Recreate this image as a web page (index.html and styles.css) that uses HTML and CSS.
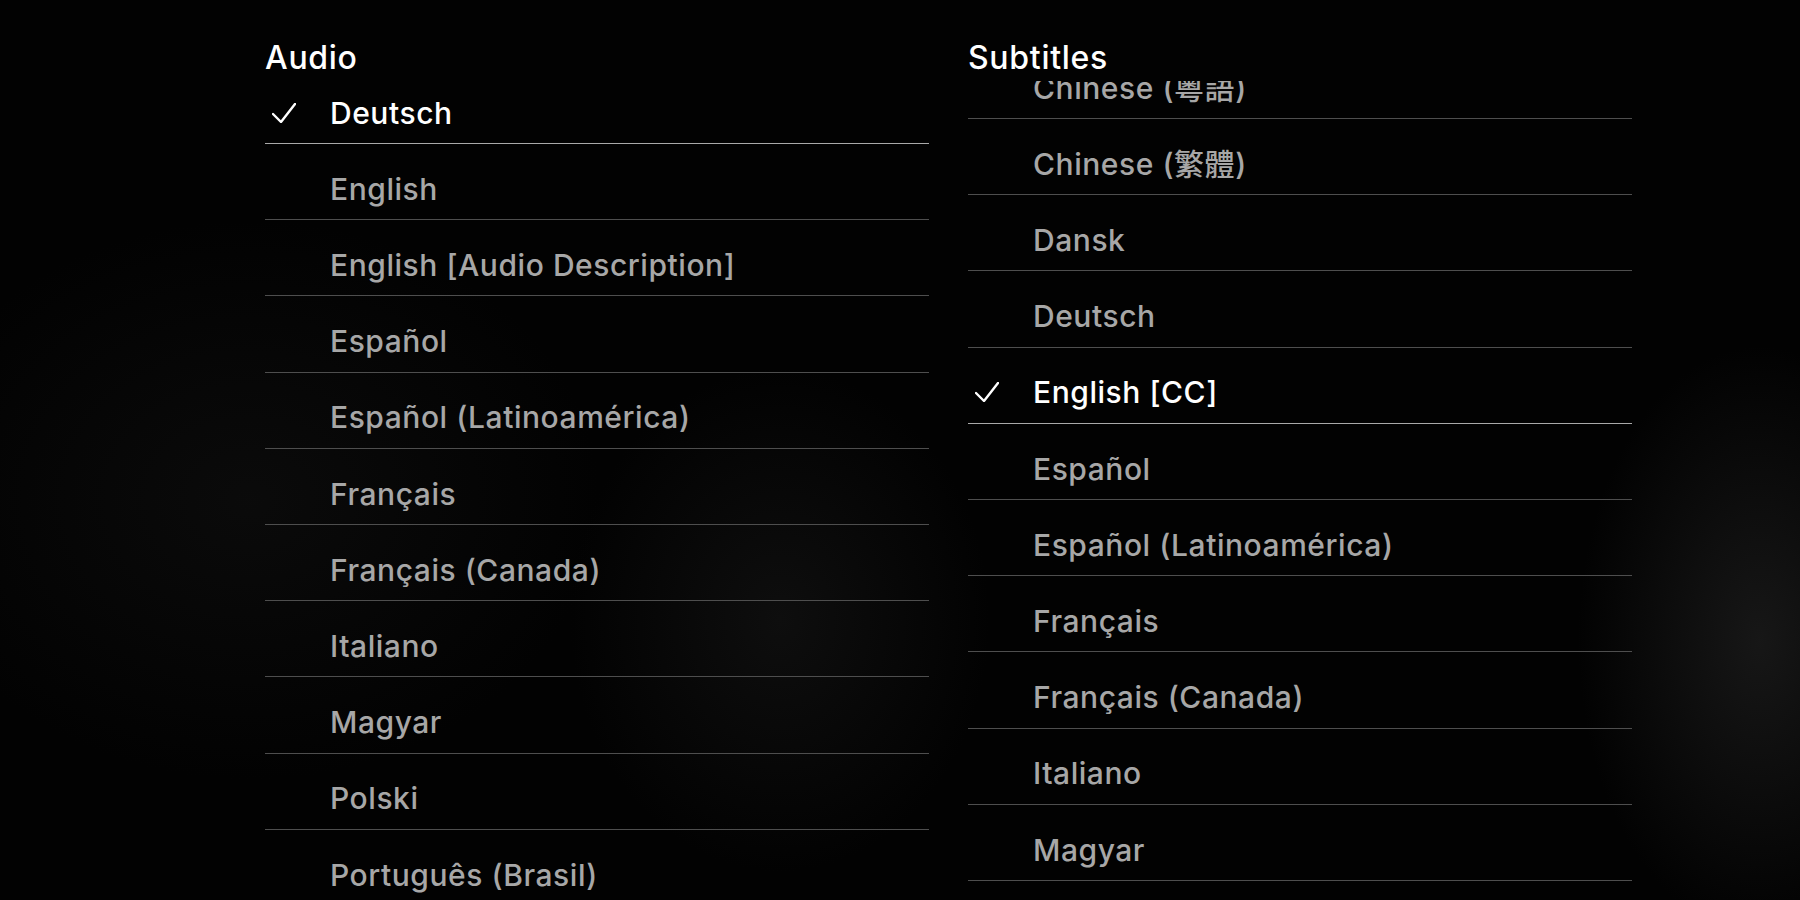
FILE: index.html
```html
<!DOCTYPE html>
<html lang="en">
<head>
<meta charset="utf-8">
<title>Audio &amp; Subtitles</title>
<link rel="stylesheet" href="styles.css">
</head>
<body>
<div class="screen">
  <section class="column">
    <h2 class="heading">Audio</h2>
    <div class="viewport">
      <ul class="list list-audio">
        <li class="row selected"><span class="mark"><svg width="24" height="20" viewBox="0 0 24 20"><polyline points="1,11 9,19 23,1" fill="none" stroke="#fff" stroke-width="2.4" stroke-linecap="round" stroke-linejoin="round"/></svg></span><span class="label">Deutsch</span></li>
        <li class="row"><span class="mark"></span><span class="label">English</span></li>
        <li class="row"><span class="mark"></span><span class="label">English [Audio Description]</span></li>
        <li class="row"><span class="mark"></span><span class="label">Español</span></li>
        <li class="row"><span class="mark"></span><span class="label">Español (Latinoamérica)</span></li>
        <li class="row"><span class="mark"></span><span class="label">Français</span></li>
        <li class="row"><span class="mark"></span><span class="label">Français (Canada)</span></li>
        <li class="row"><span class="mark"></span><span class="label">Italiano</span></li>
        <li class="row"><span class="mark"></span><span class="label">Magyar</span></li>
        <li class="row"><span class="mark"></span><span class="label">Polski</span></li>
        <li class="row"><span class="mark"></span><span class="label">Português (Brasil)</span></li>
        <li class="row"><span class="mark"></span><span class="label">Português (Portugal)</span></li>
      </ul>
    </div>
  </section>
  <section class="column">
    <h2 class="heading">Subtitles</h2>
    <div class="viewport">
      <ul class="list list-subs">
        <li class="row"><span class="mark"></span><span class="label">Chinese (粵語)</span></li>
        <li class="row"><span class="mark"></span><span class="label">Chinese (繁體)</span></li>
        <li class="row"><span class="mark"></span><span class="label">Dansk</span></li>
        <li class="row"><span class="mark"></span><span class="label">Deutsch</span></li>
        <li class="row selected"><span class="mark"><svg width="24" height="20" viewBox="0 0 24 20"><polyline points="1,11 9,19 23,1" fill="none" stroke="#fff" stroke-width="2.4" stroke-linecap="round" stroke-linejoin="round"/></svg></span><span class="label">English [CC]</span></li>
        <li class="row"><span class="mark"></span><span class="label">Español</span></li>
        <li class="row"><span class="mark"></span><span class="label">Español (Latinoamérica)</span></li>
        <li class="row"><span class="mark"></span><span class="label">Français</span></li>
        <li class="row"><span class="mark"></span><span class="label">Français (Canada)</span></li>
        <li class="row"><span class="mark"></span><span class="label">Italiano</span></li>
        <li class="row"><span class="mark"></span><span class="label">Magyar</span></li>
        <li class="row"><span class="mark"></span><span class="label">Nederlands</span></li>
      </ul>
    </div>
  </section>
</div>
</body>
</html>
```

FILE: styles.css
```css
html, body {
  margin: 0;
  padding: 0;
  width: 1800px;
  height: 900px;
  overflow: hidden;
  background: #000;
}

.screen {
  width: 1800px;
  height: 900px;
  box-sizing: border-box;
  padding: 40px 0 0 265px;
  display: flex;
  gap: 39px;
  font-family: Inter, "Noto Sans CJK TC", "Noto Sans", sans-serif;
  background:
    radial-gradient(ellipse 260px 420px at 1760px 640px, rgba(40, 40, 40, 0.55), rgba(0, 0, 0, 0) 70%),
    radial-gradient(ellipse 300px 360px at 780px 620px, rgba(22, 22, 22, 0.6), rgba(0, 0, 0, 0) 70%),
    radial-gradient(ellipse 500px 400px at 250px 500px, rgba(14, 14, 14, 0.7), rgba(0, 0, 0, 0) 70%),
    #020202;
}

.column {
  width: 664px;
  display: flex;
  flex-direction: column;
  height: 860px;
}

.heading {
  margin: 0 0 5px 0;
  font-size: 32px;
  line-height: 36px;
  font-weight: 500;
  letter-spacing: 0.7px;
  color: #fff;
}

.viewport {
  flex: 1;
  overflow: hidden;
}

.list {
  list-style: none;
  margin: 0;
  padding: 0;
}

.list-audio {
  margin-top: -13.2px;
}

.list-subs {
  margin-top: -38.2px;
}

.row {
  height: 75.2px;
  box-sizing: content-box;
  padding: 0;
  display: flex;
  align-items: flex-end;
  border-bottom: 1px solid #4e4e4e;
  color: #a7a7a7;
  font-size: 30px;
  line-height: 36px;
  font-weight: 500;
  letter-spacing: 0.55px;
}

.row.selected {
  color: #fff;
  border-bottom-color: #a9a9a9;
}

.mark {
  width: 65px;
  flex: none;
  height: 36px;
  margin-bottom: 12.3px;
  box-sizing: border-box;
  padding-left: 7px;
}

.mark svg {
  display: block;
  margin-top: 8px;
}

.label {
  display: block;
  height: 36px;
  margin-bottom: 12.3px;
  white-space: nowrap;
}
```
